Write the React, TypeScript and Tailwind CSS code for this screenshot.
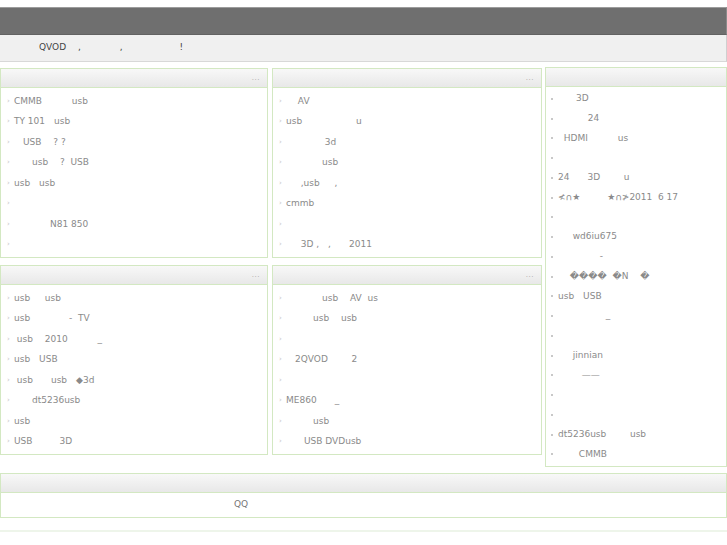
const fix = (s: string) => s.replace(/#/g, "\u3000");

const left1 = [
  "CMMB### usb",
  "TY 101#usb",
  "#USB# ? ?",
  "##usb# ?  USB",
  "usb#usb",
  "",
  "####N81 850",
  "",
];

const mid1 = [
  "# AV",
  "usb######u",
  "#### 3d",
  "####usb",
  "#  ,usb#  ,",
  "cmmb",
  "",
  "#  3D ,#,##2011",
];

const left2 = [
  "usb#  usb",
  "usb#### -  TV",
  " usb# 2010### _",
  "usb#USB",
  " usb##usb#\u25C63d",
  "##dt5236usb",
  "usb",
  "USB###3D",
];

const mid2 = [
  "####usb# AV  us",
  "###usb# usb",
  "",
  "#2QVOD##  2",
  "",
  "ME860##_",
  "###usb",
  "##USB DVDusb",
];

const right = [
  "##3D",
  "### 24",
  "  HDMI### us",
  "",
  "24##3D##  u",
  "\u226E\u2229\u2605###\u2605\u2229\u226F2011  6 17",
  "",
  "#  wd6iu675",
  "####  -",
  "# \uFFFD\uFFFD\uFFFD\uFFFD  \uFFFDN# \uFFFD",
  "usb#USB",
  "##### _",
  "",
  "#  jinnian",
  "##  \u2014\u2014",
  "",
  "",
  "dt5236usb##  usb",
  "## CMMB",
];

const font = { fontFamily: '"DejaVu Sans", "Noto Sans CJK SC", sans-serif' };

function PanelHead({ more = true }: { more?: boolean }) {
  return (
    <div className="h-[19px] flex items-center justify-end pr-[7px] bg-gradient-to-b from-[#f8f8f8] to-[#e8e8e8] border-b border-[#d3e8c2]">
      {more && <span className="text-[7px] leading-none text-[#aaa] tracking-[0.5px]">...</span>}
    </div>
  );
}

function ListPanel({ items }: { items: string[] }) {
  return (
    <div className="h-[190px] border border-[#d3e8c2] bg-white">
      <PanelHead />
      <ul className="pt-[3px]">
        {items.map((t, i) => (
          <li key={i} className="h-[20.5px] flex items-center pl-[6px] text-[9px] text-[#8a8a8a]">
            <span className="w-[7px] text-[7px] text-[#c4c4c4] leading-none">›</span>
            <span className="whitespace-pre">{fix(t)}</span>
          </li>
        ))}
      </ul>
    </div>
  );
}

export default function App() {
  return (
    <div className="w-[727px] h-[545px] bg-white pt-[7px]" style={font}>
      <div className="h-[28px] bg-[#6f6f6f] border-t border-[#9c9c9c] border-b border-b-[#626262] border-r border-r-[#8a8a8a]" />
      <div className="h-[27px] bg-[#f0f0f0] border-b border-[#d8d8d8] border-r border-r-[#cfcfcf] flex items-center pl-[12px] text-[9px] text-[#444]">
        <span className="whitespace-pre">{fix("###QVOD# ,#### ,###### !")}</span>
      </div>

      <div className="mt-[5px] flex items-start">
        <div className="w-[268px] mt-[1px] flex flex-col gap-[7px]">
          <ListPanel items={left1} />
          <ListPanel items={left2} />
        </div>
        <div className="w-[270px] ml-[4px] mt-[1px] flex flex-col gap-[7px]">
          <ListPanel items={mid1} />
          <ListPanel items={mid2} />
        </div>
        <div className="w-[182px] ml-[3px] h-[400px] border border-[#d3e8c2] bg-white">
          <PanelHead more={false} />
          <ul className="pt-[2px]">
            {right.map((t, i) => (
              <li key={i} className="h-[19.75px] flex items-center pl-[5px] text-[9px] text-[#8a8a8a]">
                <span className="w-[7px] flex items-center">
                  <span className="w-[2px] h-[2px] bg-[#c8c8c8]" />
                </span>
                <span className="whitespace-pre">{fix(t)}</span>
              </li>
            ))}
          </ul>
        </div>
      </div>

      <div className="mt-[6px] w-[727px] border border-[#d3e8c2]">
        <PanelHead more={false} />
        <div className="h-[24px] flex items-center pl-[8px] text-[9px] text-[#777]">
          <span className="whitespace-pre">{fix("#########################QQ")}</span>
        </div>
      </div>

      <div className="mt-[12px] h-[2px] bg-[#eef5ea]" />
    </div>
  );
}
